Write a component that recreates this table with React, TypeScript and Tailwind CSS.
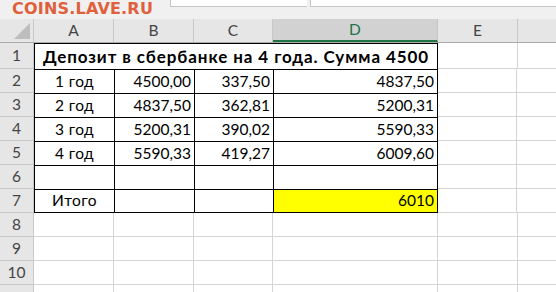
import React from 'react'

// ── Sheet geometry ───────────────────────────────────────────────────────────
const COLS = [
  { key: 'A', w: 'w-[80px]' },
  { key: 'B', w: 'w-[80px]' },
  { key: 'C', w: 'w-[79px]' },
  { key: 'D', w: 'w-[165px]' },
  { key: 'E', w: 'w-[80px]' },
  { key: 'F', w: 'flex-1' },
]

const DATA = [
  ['1 год', '4500,00', '337,50', '4837,50'],
  ['2 год', '4837,50', '362,81', '5200,31'],
  ['3 год', '5200,31', '390,02', '5590,33'],
  ['4 год', '5590,33', '419,27', '6009,60'],
]

const FONT = "font-['Lato','Liberation_Sans',sans-serif]"

function RowHead({ n, h = 'h-[24px]' }: { n?: number; h?: string }) {
  return (
    <div
      className={`${h} w-[34px] shrink-0 flex items-center justify-center bg-[#e6e6e6] border-r border-b border-[#c8c8c8] text-[15.5px] text-[#444]`}
    >
      {n}
    </div>
  )
}

function Grid({ w, last }: { w: string; last?: boolean }) {
  return <div className={`${w} shrink-0 h-full ${last ? '' : 'border-r'} border-b border-[#d4d4d4]`} />
}

export default function App() {
  return (
    <div className={`w-[556px] h-[292px] overflow-hidden bg-white ${FONT} text-[15.5px] text-black`}>
      {/* ribbon / formula bar strip */}
      <div className="h-[19px] flex bg-[#f0f0f0]">
        <div className="w-[170px] pl-[12px] pt-[1px] font-['DejaVu_Sans',sans-serif] font-bold text-[16px] leading-[16px] tracking-[0.2px] text-[#e0603c] whitespace-nowrap">
          COINS.LAVE.RU
        </div>
        <div className="w-[137px] h-[7px] bg-white border-l border-b border-[#c6c6c6]" />
        <div className="flex-1 h-[7px] ml-[3px] bg-white border-l border-b border-[#c6c6c6]" />
      </div>

      {/* column headers */}
      <div className="flex h-[24px] bg-[#e6e6e6] border-b border-[#ababab] text-[#444]">
        <div className="w-[34px] shrink-0 relative border-r border-[#c8c8c8]">
          <div className="absolute right-[3px] bottom-[3px] w-0 h-0 border-l-[16px] border-l-transparent border-b-[16px] border-b-[#bdbdbd]" />
        </div>
        {COLS.map((c) =>
          c.key === 'D' ? (
            <div
              key={c.key}
              className={`${c.w} shrink-0 flex items-center justify-center bg-[#d2d2d2] text-[#217346] border-r border-[#c8c8c8] border-b-2 border-b-[#217346]`}
            >
              D
            </div>
          ) : (
            <div
              key={c.key}
              className={`${c.w} ${c.key === 'F' ? '' : 'border-r'} shrink-0 flex items-center justify-center border-[#c8c8c8]`}
            >
              {c.key === 'F' ? '' : c.key}
            </div>
          ),
        )}
      </div>

      {/* row 1 – merged title */}
      <div className="flex h-[26px]">
        <RowHead n={1} h="h-[26px]" />
        <div className="w-[404px] shrink-0 flex items-center justify-center border border-black border-b-0 font-bold text-[17px] tracking-[0.9px] whitespace-nowrap">
          Депозит в сбербанке на 4 года. Сумма 4500
        </div>
        <Grid w="w-[80px]" />
        <Grid w="flex-1" last />
      </div>

      {/* rows 2–5 */}
      {DATA.map((r, i) => (
        <div key={i} className="flex h-[24px]">
          <RowHead n={i + 2} />
          <div className="w-[80px] shrink-0 flex items-center justify-center border-l border-t border-black tracking-[0.4px]">{r[0]}</div>
          <div className="w-[80px] shrink-0 flex items-center justify-end pr-[3px] border-l border-t border-black">{r[1]}</div>
          <div className="w-[79px] shrink-0 flex items-center justify-end pr-[3px] border-l border-t border-black">{r[2]}</div>
          <div className="w-[165px] shrink-0 flex items-center justify-end pr-[3px] border-x border-t border-black">{r[3]}</div>
          <Grid w="w-[79px]" />
          <Grid w="flex-1" last />
        </div>
      ))}

      {/* row 6 */}
      <div className="flex h-[24px]">
        <RowHead n={6} />
        <div className="w-[80px] shrink-0 border-l border-t border-black" />
        <div className="w-[80px] shrink-0 border-l border-t border-black" />
        <div className="w-[79px] shrink-0 border-l border-t border-black" />
        <div className="w-[165px] shrink-0 border-x border-t border-black" />
        <Grid w="w-[79px]" />
        <Grid w="flex-1" last />
      </div>

      {/* row 7 */}
      <div className="flex h-[24px]">
        <RowHead n={7} />
        <div className="w-[80px] shrink-0 flex items-center justify-center border-l border-y border-black tracking-[0.4px]">Итого</div>
        <div className="w-[80px] shrink-0 border-l border-y border-black" />
        <div className="w-[79px] shrink-0 border-l border-y border-black" />
        <div className="w-[165px] shrink-0 flex items-center justify-end pr-[3px] bg-[#ffff00] border border-black">6010</div>
        <Grid w="w-[79px]" />
        <Grid w="flex-1" last />
      </div>

      {/* rows 8–10 empty, row 11 only just peeks in */}
      {[8, 9, 10, 11].map((n) => (
        <div key={n} className="flex h-[24px]">
          <RowHead n={n < 11 ? n : undefined} />
          {COLS.map((c) => (
            <Grid key={c.key} w={c.w} last={c.key === 'F'} />
          ))}
        </div>
      ))}
    </div>
  )
}
